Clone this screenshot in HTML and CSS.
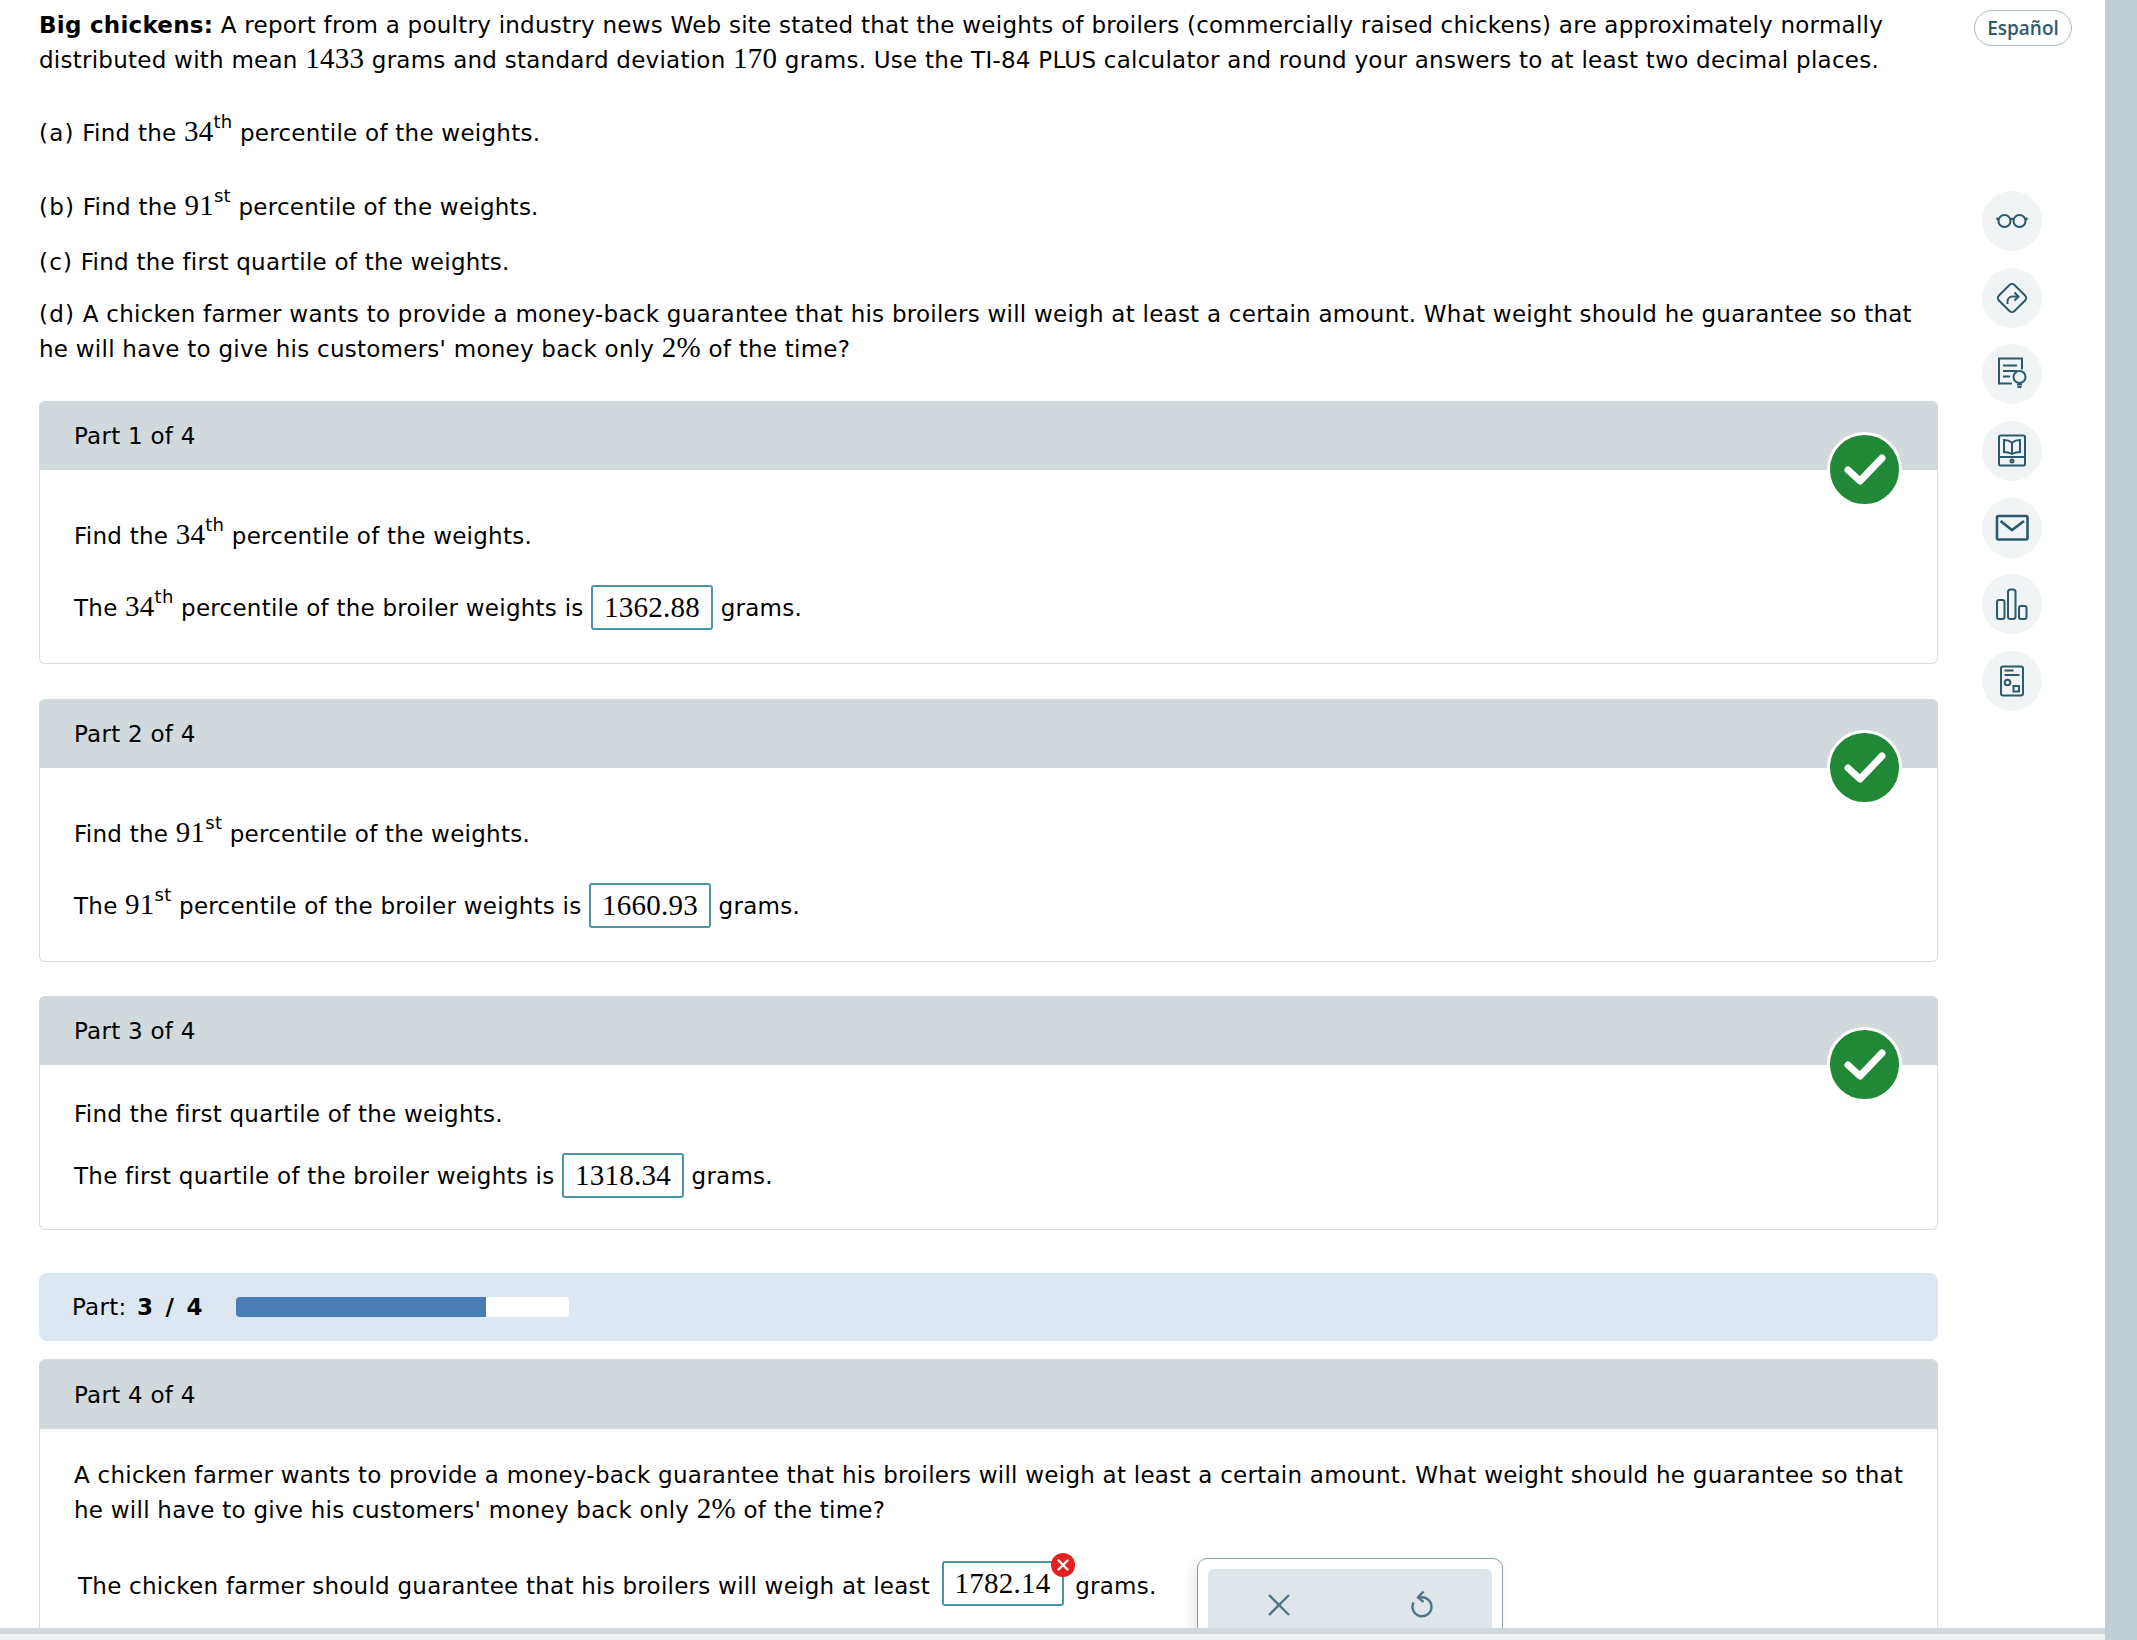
FILE: index.html
```html
<!DOCTYPE html>
<html>
<head>
<meta name="viewport" content="width=device-width, initial-scale=1">
<title>Big chickens</title>
<link rel="stylesheet" href="styles.css">
</head>
<body>
<div class="page">
  <div class="main">
    <div class="content">
      <div class="question">
        <p><b>Big chickens:</b> A report from a poultry industry news Web site stated that the weights of broilers (commercially raised chickens) are approximately normally distributed with mean <span class="math">1433</span> grams and standard deviation <span class="math">170</span> grams. Use the TI-84 PLUS calculator and round your answers to at least two decimal places.</p>
        <p class="q-a"><span class="lab">(a)</span> Find the <span class="math">34</span><sup>th</sup> percentile of the weights.</p>
        <p class="q-b"><span class="lab">(b)</span> Find the <span class="math">91</span><sup>st</sup> percentile of the weights.</p>
        <p class="q-c"><span class="lab">(c)</span> Find the first quartile of the weights.</p>
        <p class="q-d"><span class="lab">(d)</span> A chicken farmer wants to provide a money-back guarantee that his broilers will weigh at least a certain amount. What weight should he guarantee so that he will have to give his customers' money back only <span class="math">2%</span> of the time?</p>

        <div class="card">
          <div class="card-head">Part 1 of 4</div>
          <div class="card-body">
            <p>Find the <span class="math">34</span><sup>th</sup> percentile of the weights.</p>
            <p class="answer">The <span class="math">34</span><sup>th</sup> percentile of the broiler weights is <span class="input">1362.88</span> grams.</p>
          </div>
          <svg class="check" viewBox="0 0 75 75"><circle cx="37.5" cy="37.5" r="36" fill="#218838" stroke="#fff" stroke-width="3"/><path d="M21 38l12 11 22-23" fill="none" stroke="#fff" stroke-width="7" stroke-linecap="round" stroke-linejoin="round"/></svg>
        </div>

        <div class="card">
          <div class="card-head">Part 2 of 4</div>
          <div class="card-body">
            <p>Find the <span class="math">91</span><sup>st</sup> percentile of the weights.</p>
            <p class="answer">The <span class="math">91</span><sup>st</sup> percentile of the broiler weights is <span class="input">1660.93</span> grams.</p>
          </div>
          <svg class="check" viewBox="0 0 75 75"><circle cx="37.5" cy="37.5" r="36" fill="#218838" stroke="#fff" stroke-width="3"/><path d="M21 38l12 11 22-23" fill="none" stroke="#fff" stroke-width="7" stroke-linecap="round" stroke-linejoin="round"/></svg>
        </div>

        <div class="card">
          <div class="card-head">Part 3 of 4</div>
          <div class="card-body tight">
            <p>Find the first quartile of the weights.</p>
            <p class="answer">The first quartile of the broiler weights is <span class="input">1318.34</span> grams.</p>
          </div>
          <svg class="check" viewBox="0 0 75 75"><circle cx="37.5" cy="37.5" r="36" fill="#218838" stroke="#fff" stroke-width="3"/><path d="M21 38l12 11 22-23" fill="none" stroke="#fff" stroke-width="7" stroke-linecap="round" stroke-linejoin="round"/></svg>
        </div>

        <div class="progress">
          <span class="progress-label">Part: <b>3 / 4</b></span>
          <div class="bar"><div class="bar-fill" style="width: 75%"></div></div>
        </div>

        <div class="card card-last">
          <div class="card-head">Part 4 of 4</div>
          <div class="card-body last">
            <p>A chicken farmer wants to provide a money-back guarantee that his broilers will weigh at least a certain amount. What weight should he guarantee so that he will have to give his customers' money back only <span class="math">2%</span> of the time?</p>
            <div class="answer answer-last">
              <span class="answer-text">The chicken farmer should guarantee that his broilers will weigh at least <span class="input has-error">1782.14<svg class="err" viewBox="0 0 24 24"><circle cx="12" cy="12" r="12" fill="#e62020"/><path d="M7.5 7.5l9 9M16.5 7.5l-9 9" stroke="#fff" stroke-width="2.4" stroke-linecap="round"/></svg></span> grams.</span>
              <div class="tools">
                <div class="tools-inner">
                  <svg class="tool" viewBox="0 0 30 30"><path d="M5 5l20 20M25 5L5 25" fill="none" stroke="#4f7585" stroke-width="2.4"/></svg>
                  <svg class="tool" viewBox="0 0 30 30"><g transform="translate(2 0)"><path d="M12 7.500a9.500 9.500 0 1 1-6.500 5" fill="none" stroke="#4f7585" stroke-width="2.4"/><path d="M15.500 1.500l-5.500 6 5.500 4.500" fill="none" stroke="#4f7585" stroke-width="2.400"/></g></svg>
                </div>
              </div>
            </div>
          </div>
        </div>
      </div>

      <div class="rail">
        <div class="lang">Español</div>
        <div class="rail-icons">
          <div class="rail-btn"><svg viewBox="0 0 60 60"><g class="ico"><circle cx="22.500" cy="30" r="6"/><circle cx="37.500" cy="30" r="6"/><path d="M28 28.500q2-1.500 4 0M16.500 29l-2-2M43.500 29l2-2"/></g></svg></div>
          <div class="rail-btn"><svg viewBox="0 0 60 60"><g class="ico"><rect x="19" y="19" width="22" height="22" rx="3.500" transform="rotate(45 30 30)"/><path d="M25.500 36v-2.500a5 5 0 0 1 5-5h5.500M32.500 24.500l4 4-4 4"/></g></svg></div>
          <div class="rail-btn"><svg viewBox="0 0 60 60"><g class="ico"><path d="M30 39.500H17V14.500h23v11"/><path d="M21 21.500h14M21 27h14M21 32.500h7"/><circle cx="37.500" cy="33" r="6"/><path d="M35 40.500h5M35.500 43h4"/></g></svg></div>
          <div class="rail-btn"><svg viewBox="0 0 60 60"><g class="ico"><rect x="17" y="14.500" width="26" height="30" rx="1.500"/><path d="M17 36h26"/><circle cx="30" cy="40" r="1.500"/><path d="M30 21.500q-3.500-2.500-8-2.500v12q4.500 0 8 2 3.500-2 8-2V19q-4.500 0-8 2.500zM30 21.500v12"/></g></svg></div>
          <div class="rail-btn"><svg viewBox="0 0 60 60"><g class="ico ico-bold"><rect x="15" y="18" width="30.500" height="23.500" rx="1.500"/><path d="M18.500 23l11.500 9 12-9"/></g></svg></div>
          <div class="rail-btn"><svg viewBox="0 0 60 60"><g class="ico"><rect x="15" y="26" width="7.500" height="19" rx="2"/><rect x="26" y="15.500" width="7.500" height="29.500" rx="2.500"/><rect x="37" y="32" width="7.500" height="13" rx="2"/></g></svg></div>
          <div class="rail-btn"><svg viewBox="0 0 60 60"><g class="ico"><rect x="19" y="15.500" width="22" height="29" rx="2"/><path d="M22.500 19.500h9M22.500 24h15"/><circle cx="25.500" cy="31.500" r="2.800"/><rect x="31.500" y="35" width="5.500" height="5.500"/></g></svg></div>
        </div>
      </div>
    </div>
    <div class="strip"></div>
  </div>
  <div class="scroll"></div>
</div>
</body>
</html>
```

FILE: styles.css
```css
* {
  box-sizing: border-box;
}

html, body {
  margin: 0;
  height: 100%;
  overflow: hidden;
  background: #fff;
}

body {
  font-family: "DejaVu Sans", Verdana, sans-serif;
  font-size: 23px;
  letter-spacing: 0.25px;
  line-height: 35px;
  color: #000;
}

p {
  margin: 0;
}

.page {
  display: flex;
  height: 1640px;
}

.main {
  width: 2105px;
  display: flex;
  flex-direction: column;
}

.scroll {
  width: 32px;
  background: #c1ced4;
}

.content {
  flex: 1;
  min-height: 0;
  overflow: hidden;
  display: flex;
}

.strip {
  height: 12px;
  background: #eef2f3;
  border-top: 6px solid #d0dade;
}

/* question column */
.question {
  width: 1938px;
  flex: none;
  padding: 8px 0 0 39px;
}

.math {
  font-family: "Liberation Serif", "Times New Roman", serif;
  font-size: 29px;
  line-height: 0;
}

.lab {
  letter-spacing: 1.2px;
}

sup {
  font-size: 18px;
  line-height: 0;
  vertical-align: 13px;
}

.q-a { margin-top: 38px; }
.q-b { margin-top: 39px; }
.q-c { margin-top: 20px; }
.q-d { margin: 17px 0 -0.5px; }

/* part cards */
.card {
  position: relative;
  margin-top: 34.5px;
  border: 1px solid #d5dde0;
  border-top: 0;
  border-radius: 6px;
}

.card-head {
  height: 69px;
  padding: 0 35px;
  line-height: 71px;
  background: #d1d9dc;
  border-radius: 6px 6px 0 0;
  margin: 0 -1px;
}

.card-body {
  padding: 49px 20px 33px 34px;
}

.card-body.tight {
  padding-top: 31.5px;
  padding-bottom: 31.5px;
}

.card-body.last {
  padding-top: 29.5px;
}

.answer {
  margin-top: 31px;
  height: 45px;
  line-height: 47px;
}

.tight .answer {
  margin-top: 21px;
}

.input {
  position: relative;
  display: inline-block;
  height: 45px;
  padding: 0 11px;
  line-height: 40px;
  vertical-align: top;
  font-family: "Liberation Serif", "Times New Roman", serif;
  font-size: 29px;
  background: #fff;
  border: 2px solid #4c95a3;
  border-radius: 3px;
}

.has-error {
  margin: 0 4px;
}

.check {
  position: absolute;
  right: 35px;
  top: 31px;
  width: 75px;
  height: 75px;
}

.err {
  position: absolute;
  right: -13px;
  top: -10px;
  width: 24px;
  height: 24px;
}

/* progress */
.progress {
  display: flex;
  align-items: center;
  height: 68px;
  margin-top: 43px;
  padding: 0 33px;
  background: #dce7f1;
  border-radius: 8px;
}

.progress-label {
  width: 164px;
}

.progress-label b {
  margin-left: 3px;
  word-spacing: 4px;
}

.bar {
  width: 333px;
  height: 20px;
  background: #fff;
  border-radius: 4px;
  overflow: hidden;
}

.bar-fill {
  height: 100%;
  background: #4a7db5;
}

.card-last {
  margin-top: 17.5px;
  border-top: 1px solid #d5dde0;
}

/* last answer row */
.answer-last {
  position: relative;
  margin-top: 32.5px;
  padding-left: 4px;
  line-height: 50px;
}

.tools {
  position: absolute;
  left: 1123px;
  top: -3px;
  width: 306px;
  height: 120px;
  padding: 10px;
  background: #fff;
  border: 1px solid #8a9ea6;
  border-radius: 10px;
  box-shadow: -4px 4px 12px rgba(120, 140, 150, 0.2);
}

.tools-inner {
  display: flex;
  justify-content: space-around;
  height: 100px;
  padding-top: 21px;
  background: #dfe6e9;
  border-radius: 6px;
}

.tool {
  width: 30px;
  height: 30px;
}

/* right rail */
.rail {
  flex: 1;
  position: relative;
  padding-left: 36px;
}

.lang {
  width: 98px;
  height: 36px;
  margin-top: 10px;
  text-align: center;
  font-size: 19px;
  font-weight: 600;
  font-family: "Open Sans", sans-serif;
  line-height: 34px;
  letter-spacing: 0;
  color: #2f5a6b;
  border: 1px solid #a7b8bf;
  border-radius: 18px;
}

.rail-icons {
  display: flex;
  flex-direction: column;
  gap: 16.7px;
  margin: 145px 0 0 8px;
}

.rail-btn {
  width: 60px;
  height: 60px;
  border-radius: 50%;
  background: #f0f4f5;
}

.rail-btn svg {
  display: block;
  width: 60px;
  height: 60px;
}

.ico {
  fill: none;
  stroke: #2c5a6b;
  stroke-width: 2;
}

.ico-bold {
  stroke-width: 2.6;
}
```
